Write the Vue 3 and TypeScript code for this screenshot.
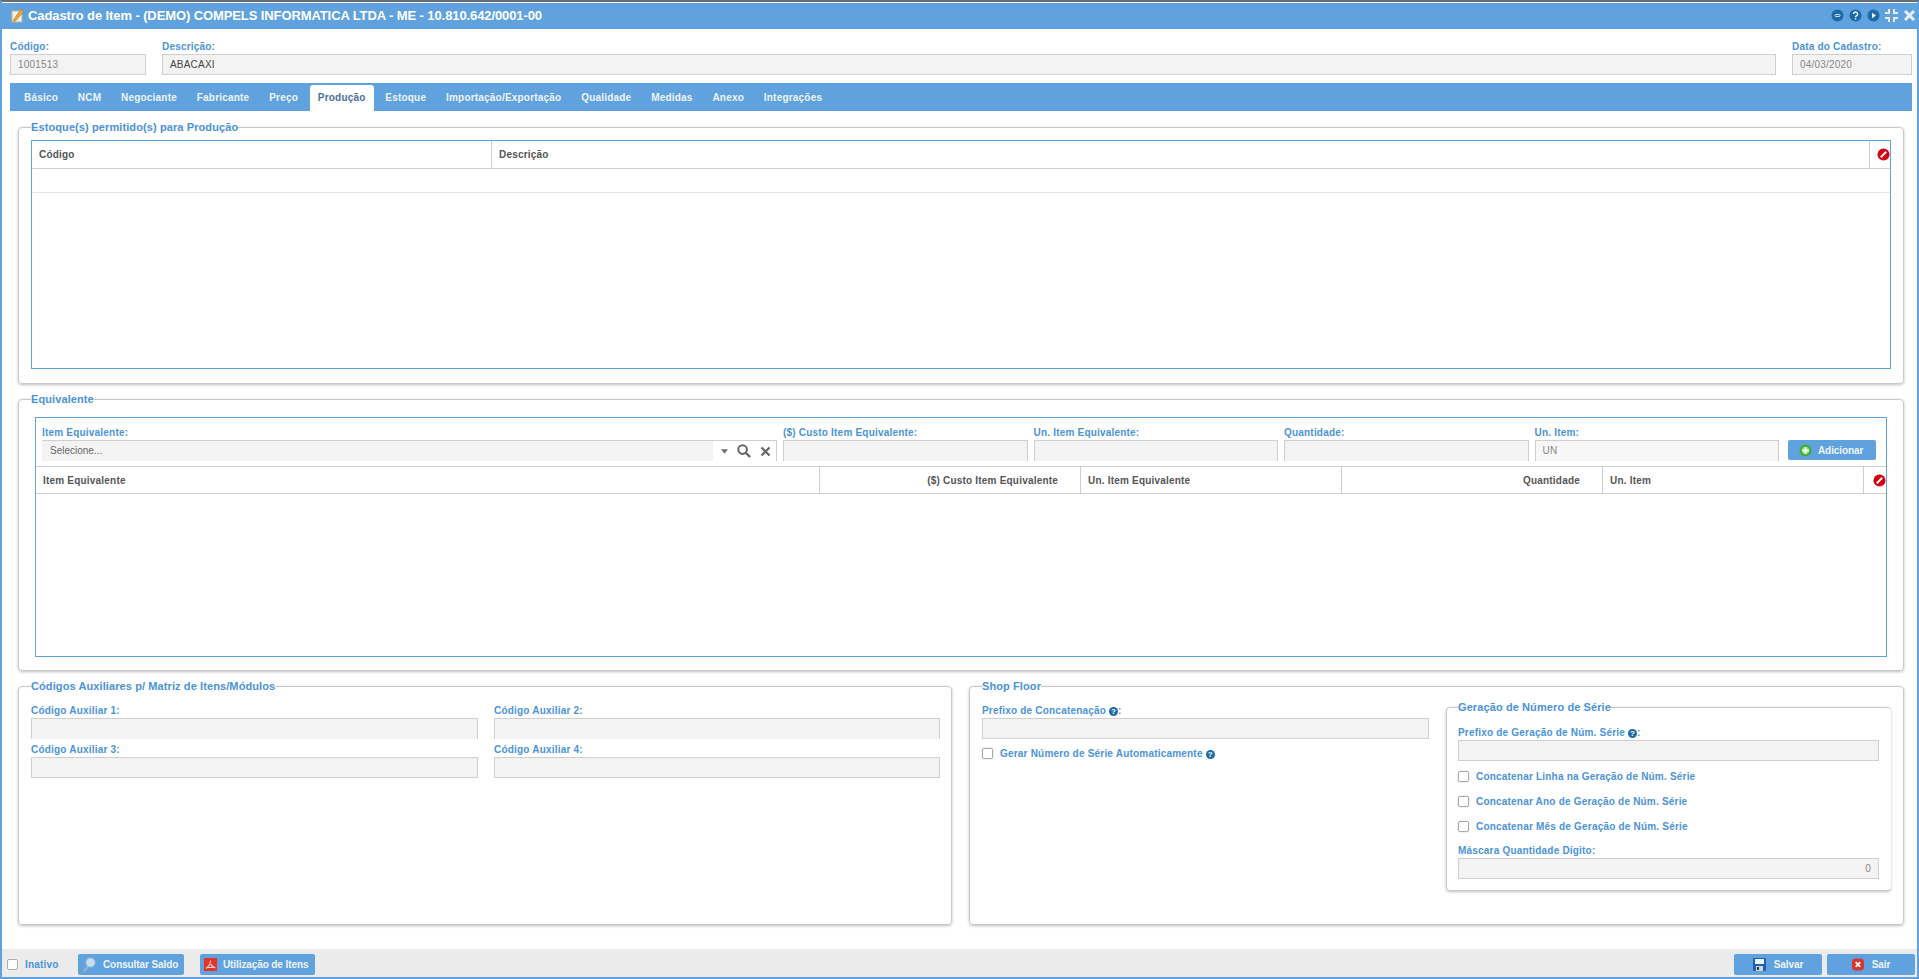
<script setup lang="ts">
const tabs: string[] = ['Básico','NCM','Negociante','Fabricante','Preço','Produção','Estoque','Importação/Exportação','Qualidade','Medidas','Anexo','Integrações']
const serial: string[] = ['Concatenar Linha na Geração de Núm. Série','Concatenar Ano de Geração de Núm. Série','Concatenar Mês de Geração de Núm. Série']
const auxiliares: string[] = ['Código Auxiliar 1:','Código Auxiliar 2:','Código Auxiliar 3:','Código Auxiliar 4:']
</script>

<template>
  <div class="win">
    <header class="title">
      <svg class="t-ico" width="16" height="16" viewBox="0 0 16 16"><rect x="3" y="4" width="10" height="11" fill="#f4f1e4" stroke="#b9b39c"/><path d="M5 12 L12 2.500 L14.500 4.500 L7 13.500 L4.500 14.500Z" fill="#eda93a" stroke="#a8701c" stroke-width=".6"/></svg>
      <span class="t-text">Cadastro de Item - (DEMO) COMPELS INFORMATICA LTDA - ME - 10.810.642/0001-00</span>
      <div class="t-btns">
        <svg width="13" height="13" viewBox="0 0 13 13"><circle cx="6.500" cy="6.500" r="6" fill="#1c6aa8"/><rect x="4" y="5.500" width="5" height="2" rx="1" fill="none" stroke="#cfe0ee"/></svg>
        <svg width="13" height="13" viewBox="0 0 13 13"><circle cx="6.500" cy="6.500" r="6" fill="#1c6aa8"/><path d="M4.400 5a2.100 2 0 1 1 3.200 1.700c-.8.5-1.100.8-1.100 1.600M6.500 9.300v1.200" fill="none" stroke="#fff" stroke-width="1.400"/></svg>
        <svg width="13" height="13" viewBox="0 0 13 13"><circle cx="6.500" cy="6.500" r="6" fill="#1c6aa8"/><path d="M5 3.800 L9 6.500 L5 9.200Z" fill="#fff"/></svg>
        <svg width="13" height="13" viewBox="0 0 13 13"><path d="M4 0v4H0M9 0v4h4M4 13V9H0M9 13V9h4" fill="none" stroke="#e4eef8" stroke-width="2"/></svg>
        <svg width="13" height="13" viewBox="0 0 13 13"><path d="M2 2L11 11M11 2L2 11" stroke="#e9f1f9" stroke-width="3"/></svg>
      </div>
    </header>

    <div class="head">
      <div class="f f-code"><label>Código:</label><div class="inp">1001513</div></div>
      <div class="f f-desc"><label>Descrição:</label><div class="inp dark">ABACAXI</div></div>
      <div class="f f-date"><label>Data do Cadastro:</label><div class="inp">04/03/2020</div></div>
    </div>

    <nav class="tabs">
      <span v-for="t in tabs" :key="t" class="tab" :class="{ on: t === 'Produção' }">{{ t }}</span>
    </nav>

    <main class="body">
      <fieldset class="fs fs1">
        <legend>Estoque(s) permitido(s) para Produção</legend>
        <div class="grid g1">
          <div class="ghead">
            <div class="c col-code">Código</div>
            <div class="c grow">Descrição</div>
            <div class="c xc">
              <svg class="no" width="13" height="13" viewBox="0 0 13 13"><circle cx="6.500" cy="6.500" r="6" fill="#d3000f"/><path d="M3.800 9.200L9.200 3.800" stroke="#fff" stroke-width="2"/></svg>
            </div>
          </div>
          <div class="grow-row"></div>
        </div>
      </fieldset>

      <fieldset class="fs fs2">
        <legend>Equivalente</legend>
        <div class="box">
          <div class="addrow">
            <div class="f f-item">
              <label>Item Equivalente:</label>
              <div class="sel">
                <span class="sel-in">Selecione...</span>
                <span class="sel-btns">
                  <svg width="7" height="5" viewBox="0 0 9 6"><path d="M0 0h9L4.500 6z" fill="#6f6f6f"/></svg>
                  <svg width="14" height="14" viewBox="0 0 14 14"><circle cx="5.600" cy="5.600" r="4.300" fill="none" stroke="#666" stroke-width="2"/><path d="M9 9l4 4" stroke="#666" stroke-width="2.400"/></svg>
                  <svg width="11" height="11" viewBox="0 0 11 11"><path d="M1.500 1.500l8 8M9.500 1.500l-8 8" stroke="#666" stroke-width="2.200"/></svg>
                </span>
              </div>
            </div>
            <div class="f f-a"><label>($) Custo Item Equivalente:</label><div class="inp cut"></div></div>
            <div class="f f-a"><label>Un. Item Equivalente:</label><div class="inp cut"></div></div>
            <div class="f f-a"><label>Quantidade:</label><div class="inp cut"></div></div>
            <div class="f f-a"><label>Un. Item:</label><div class="inp cut lite">UN</div></div>
            <button class="btn add" type="button">
              <svg width="13" height="13" viewBox="0 0 14 14"><circle cx="7" cy="7" r="6.500" fill="#3fae3a"/><circle cx="7" cy="7" r="4" fill="#7fdc6a"/><path d="M7 3.500v7M3.500 7h7" stroke="#fff" stroke-width="2"/></svg>
              Adicionar
            </button>
          </div>
          <div class="ghead g2">
            <div class="c col-item">Item Equivalente</div>
            <div class="c r col-w">($) Custo Item Equivalente</div>
            <div class="c col-w">Un. Item Equivalente</div>
            <div class="c r col-w">Quantidade</div>
            <div class="c col-w">Un. Item</div>
            <div class="c xc grow">
              <svg class="no" width="13" height="13" viewBox="0 0 13 13"><circle cx="6.500" cy="6.500" r="6" fill="#d3000f"/><path d="M3.800 9.200L9.200 3.800" stroke="#fff" stroke-width="2"/></svg>
            </div>
          </div>
        </div>
      </fieldset>

      <div class="cols">
        <fieldset class="fs fs3">
          <legend>Códigos Auxiliares p/ Matriz de Itens/Módulos</legend>
          <div class="aux">
            <div v-for="(a, i) in auxiliares" :key="a" class="f"><label>{{ a }}</label><div class="inp" :class="{ cut: i < 2 }"></div></div>
          </div>
        </fieldset>

        <fieldset class="fs fs4">
          <legend>Shop Floor</legend>
          <div class="sf">
            <div class="sf-l">
              <div class="f">
                <label>Prefixo de Concatenação <i class="q">?</i>:</label>
                <div class="inp"></div>
              </div>
              <label class="chk first"><span class="cb"></span><span>Gerar Número de Série Automaticamente <i class="q">?</i></span></label>
            </div>
            <fieldset class="fs fs5">
              <legend>Geração de Número de Série</legend>
              <div class="f">
                <label>Prefixo de Geração de Núm. Série <i class="q">?</i>:</label>
                <div class="inp"></div>
              </div>
              <label v-for="s in serial" :key="s" class="chk"><span class="cb"></span>{{ s }}</label>
              <div class="f mask">
                <label>Máscara Quantidade Dígito:</label>
                <div class="inp num">0</div>
              </div>
            </fieldset>
          </div>
        </fieldset>
      </div>
    </main>

    <footer class="foot">
      <label class="chk inat"><span class="cb"></span>Inativo</label>
      <button class="btn b1" type="button">
        <svg width="13" height="15" viewBox="0 0 13 15"><path d="M5 9.500L1 14" stroke="#9db4c6" stroke-width="2.200"/><circle cx="7.500" cy="5.500" r="4.800" fill="#c3def2" stroke="#8aaac4"/></svg>
        Consultar Saldo
      </button>
      <button class="btn b2" type="button">
        <svg width="13" height="13" viewBox="0 0 13 13"><rect width="13" height="13" fill="#e3342a"/><path d="M6.500 2.500C6.300 6 5 8.500 2 10.500M6.500 6.500C8 8 9.500 9.500 11.500 10M3 9.500h7.500" fill="none" stroke="#f7d5d0" stroke-width="1.100"/></svg>
        Utilização de Itens
      </button>
      <span class="sp"></span>
      <button class="btn b3" type="button">
        <svg width="13" height="13" viewBox="0 0 13 13"><rect width="13" height="13" rx="1" fill="#1f5fb4"/><rect x="2" y="1" width="9" height="5" fill="#eef3f8"/><rect x="3" y="8" width="7" height="5" fill="#d0d6dc"/><rect x="4" y="9" width="2" height="3" fill="#333"/></svg>
        Salvar
      </button>
      <button class="btn b4" type="button">
        <svg width="12" height="13" viewBox="0 0 13 13"><rect width="13" height="13" rx="4" fill="#d8352f"/><path d="M4 4l5 5M9 4l-5 5" stroke="#fff" stroke-width="1.800"/></svg>
        Sair
      </button>
    </footer>
  </div>
</template>

<style>
html, body { margin: 0; background: #fff; }
</style>

<style scoped>
.win {
  width: 1919px; height: 979px; box-sizing: border-box; overflow: hidden;
  display: flex; flex-direction: column; background: #fff;
  border: 2px solid #5fa2de; border-top: 2px solid #666e78;
  font-family: "Liberation Sans", Arial, sans-serif; font-size: 10px; color: #555;
}
.title {
  height: 26px; flex: none; margin-top: 1px; background: #5fa2de; color: #fff; box-sizing: border-box;
  display: flex; align-items: center; padding: 0 0 2px 7px;
}
.t-ico { margin-right: 3px; flex: none; }
.t-text { font-size: 13px; font-weight: bold; letter-spacing: -.1px; }
.t-btns { margin-left: auto; display: flex; align-items: center; gap: 5px; padding-right: 1px; }
.head { flex: none; display: flex; gap: 16px; padding: 10px 5px 0 8px; height: 44px; }
.f { display: flex; flex-direction: column; min-width: 0; }
.f label { color: #4b93d8; font-weight: bold; font-size: 10px; line-height: 15px; height: 15px; letter-spacing: .2px; white-space: nowrap; }
.inp {
  box-sizing: border-box; height: 21px; background: #f3f3f3; border: 1px solid #cfcfcf;
  padding: 0 7px; line-height: 19px; color: #888; font-size: 10px; letter-spacing: .2px;
}
.inp.dark { color: #444; }
.inp.lite { background: #f7f7f7; }
.inp.cut { border-bottom: 0; }
.inp.num { text-align: right; }
.f-code { width: 136px; }
.f-desc { flex: 1; }
.f-date { width: 120px; }
.tabs {
  flex: none; margin: 0 5px 0 8px; height: 28px; background: #5fa2de;
  display: flex; align-items: flex-end; padding-left: 6px; box-sizing: border-box;
}
.tab { color: #eef5fc; font-weight: bold; font-size: 10px; line-height: 26px; height: 26px; padding: 0 8px; margin-right: 3.830px; letter-spacing: .2px; white-space: nowrap; }
.tab.on { background: #fff; color: #4a6f96; border-radius: 3px 3px 0 0; }
.body { flex: 1; min-height: 0; padding: 9px 13px 0 16px; display: flex; flex-direction: column; }
.fs {
  margin: 0; padding: 0; min-width: 0; box-sizing: border-box;
  border: 1px solid #c9c9c9; border-radius: 4px; box-shadow: 0 1px 3px rgba(0,0,0,.25);
}
.fs legend { color: #4b93d8; font-size: 11px; font-weight: bold; padding: 0; margin-left: 12px; line-height: 15px; letter-spacing: .1px; }
.fs1 { height: 264px; }
.grid { margin: 5px 12px 0 12px; border: 1px solid #5fa2de; height: 229px; box-sizing: border-box; }
.ghead { display: flex; height: 28px; border-bottom: 1px solid #cfcfcf; box-sizing: border-box; }
.col-code { width: 460px; }
.col-item { width: 784px; }
.col-w { width: 261px; }
.c { box-sizing: border-box; height: 100%; border-right: 1px solid #cfcfcf; padding: 0 7px; line-height: 27px; font-weight: bold; color: #555; font-size: 10px; letter-spacing: .2px; white-space: nowrap; }
.c.r { text-align: right; padding-right: 22px; }
.c.grow { flex: 1; }
.c.xc { width: 20px; padding: 0; border-right: 0; position: relative; }
.no { position: absolute; right: 0; top: 7px; }
.grow-row { height: 24px; border-bottom: 1px solid #e4e4e4; box-sizing: border-box; }
.fs2 { height: 279px; margin-top: 8px; }
.box { margin: 10px 16px 0 16px; height: 240px; border: 1px solid #5fa2de; box-sizing: border-box; }
.addrow { display: flex; height: 48px; padding: 7px 0 0 6px; box-sizing: border-box; overflow: hidden; gap: 6px; }
.f-item { width: 735px; flex: none; }
.sel { display: flex; height: 21px; border-top: 1px solid #cfcfcf; border-right: 1px solid #cfcfcf; box-sizing: border-box; }
.sel-in { width: 671px; background: #f3f3f3; padding-left: 8px; box-sizing: border-box; line-height: 20px; color: #666; font-size: 10px; }
.sel-btns { flex: 1; display: flex; align-items: center; gap: 9px; padding-left: 8px; }
.f-a { width: 244.500px; flex: none; }
.btn {
  border: 0; padding: 0; margin: 0; height: 21px; background: #5fa2de; color: #eef5fc;
  border-radius: 2px; font: bold 10px "Liberation Sans", Arial, sans-serif; letter-spacing: -.1px;
  display: inline-flex; align-items: center; justify-content: center; gap: 8px; box-sizing: border-box;
  white-space: nowrap; flex: none;
}
.btn svg { flex: none; }
.add { width: 88px; height: 20px; margin: 15px 0 0 3px; justify-content: flex-start; padding-left: 11px; gap: 6px; }
.g2 { border-top: 1px solid #cfcfcf; }
.cols { display: flex; gap: 17px; margin-top: 8px; }
.fs3 { width: 934px; height: 246px; }
.fs4 { width: 935px; height: 246px; }
.aux { display: grid; grid-template-columns: 447px 446px; column-gap: 16px; row-gap: 3px; padding: 9px 0 0 12px; }
.sf { display: flex; padding: 9px 0 0 12px; }
.sf-l { width: 447px; flex: none; }
.q { display: inline-block; width: 9px; height: 9px; border-radius: 50%; background: #1c6aa8; color: #fff; font: bold 8px/9px "Liberation Sans", sans-serif; text-align: center; vertical-align: 0; letter-spacing: 0; }
.chk { display: flex; align-items: center; gap: 7px; color: #4b93d8; font-weight: bold; font-size: 10px; letter-spacing: .2px; white-space: nowrap; }
.cb { width: 9px; height: 9px; flex: none; border: 1px solid #aaa; border-radius: 2px; background: #fff; box-shadow: 0 0 0 1px #f2f2f2; }
.first { margin-top: 8px; height: 12px; }
.fs5 { width: 445px; height: 191px; margin: -3px 0 0 17px; flex: none; padding: 10px 12px 0 11px; border-right: 0; }
.fs5 legend { margin-left: 0; }
.fs5 .chk { height: 25px; }
.fs5 .f + .chk { margin-top: 3px; }
.mask { margin-top: 4px; }
.foot { flex: none; height: 28px; background: #ebebeb; display: flex; align-items: flex-start; padding: 5px 0 0 5px; box-sizing: border-box; }
.inat { width: 71px; height: 21px; }
.b1 { width: 106px; margin-right: 16px; justify-content: flex-start; padding-left: 5px; gap: 7px; }
.b2 { width: 115px; justify-content: flex-start; padding-left: 4px; gap: 6px; }
.sp { flex: 1; }
.b3 { width: 88px; margin-right: 5px; gap: 8px; }
.b4 { width: 88px; margin-right: 2px; gap: 8px; }
</style>
